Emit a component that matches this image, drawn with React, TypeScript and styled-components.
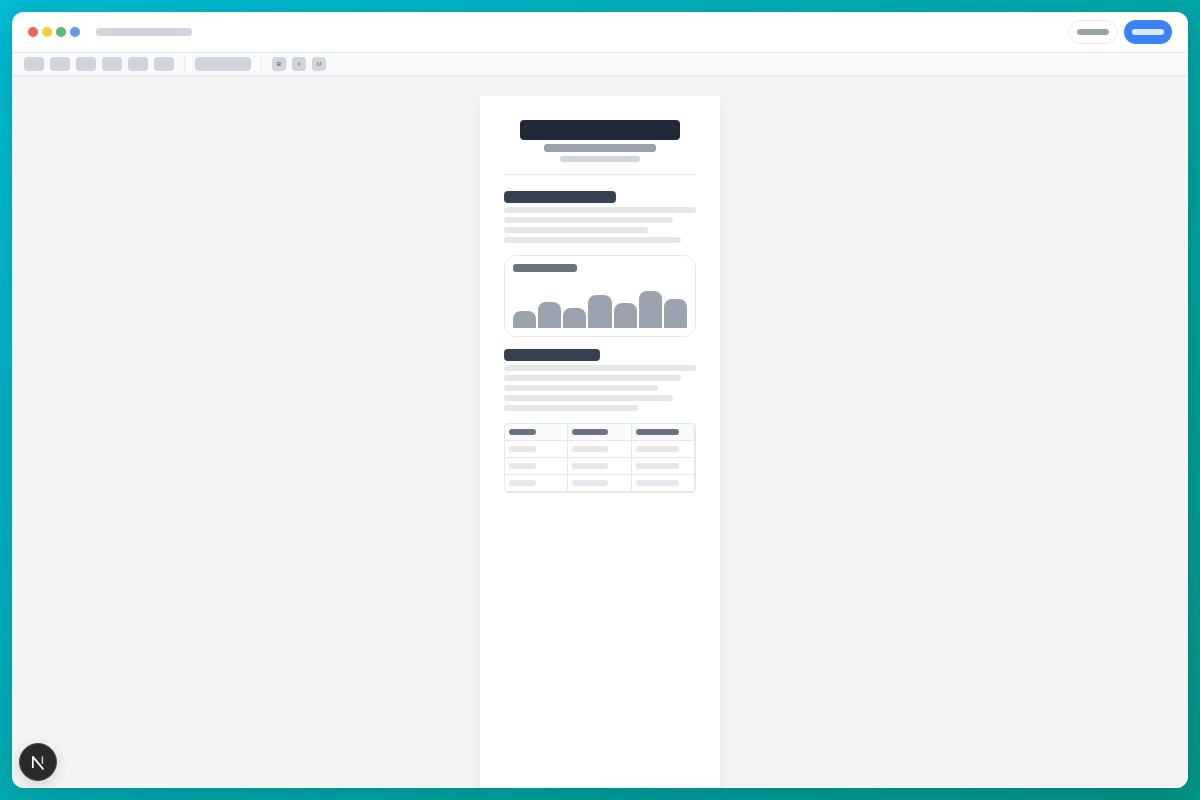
import styled, { createGlobalStyle } from 'styled-components';

const GlobalStyle = createGlobalStyle`
  html, body {
    margin: 0;
    height: 100%;
    font-family: "Liberation Sans", Arial, sans-serif;
  }
  * {
    box-sizing: border-box;
  }
`;

const DOTS = ['#ef6358', '#fbc940', '#5cb873', '#5f9bf3'];
const BARS = [17, 26, 20, 33, 25, 37, 29];
const INTRO_LINES = [192, 169, 144, 177];
const BODY_LINES = [192, 177, 154, 169, 134];
const COLUMNS = [27, 36, 43];

export default function App() {
  return (
    <Page>
      <GlobalStyle />
      <Window>
        <TitleBar>
          <TitleLeft>
            <Dots>
              {DOTS.map((color) => (
                <Dot key={color} $color={color} />
              ))}
            </Dots>
            <FileName />
          </TitleLeft>
          <Actions>
            <GhostButton>
              <Pill $width={32} $color='#9ca3af' />
            </GhostButton>
            <PrimaryButton>
              <Pill $width={32} $color='#dbeafe' />
            </PrimaryButton>
          </Actions>
        </TitleBar>
        <Toolbar>
          <ToolGroup>
            {[0, 1, 2, 3, 4, 5].map((i) => (
              <ToolButton key={i} />
            ))}
          </ToolGroup>
          <Separator />
          <Dropdown />
          <Separator />
          <FormatGroup>
            <FormatButton>B</FormatButton>
            <FormatButton>I</FormatButton>
            <FormatButton>U</FormatButton>
          </FormatGroup>
        </Toolbar>
        <Workspace>
          <Sheet>
            <Header>
              <Title />
              <Subtitle />
              <Meta />
            </Header>
            <Heading $width={112} />
            <Lines>
              {INTRO_LINES.map((width) => (
                <Line key={width} $width={width} />
              ))}
            </Lines>
            <ChartCard>
              <ChartLabel />
              <Bars>
                {BARS.map((height, i) => (
                  <Bar key={i} $height={height} />
                ))}
              </Bars>
            </ChartCard>
            <Heading $width={96} />
            <Lines>
              {BODY_LINES.map((width) => (
                <Line key={width} $width={width} />
              ))}
            </Lines>
            <Table>
              <thead>
                <tr>
                  {COLUMNS.map((width) => (
                    <HeadCell key={width}>
                      <Pill $width={width} $color='#6b7280' />
                    </HeadCell>
                  ))}
                </tr>
              </thead>
              <tbody>
                {[0, 1, 2].map((row) => (
                  <tr key={row}>
                    {COLUMNS.map((width) => (
                      <BodyCell key={width}>
                        <Pill $width={width} $color='#e5e7eb' />
                      </BodyCell>
                    ))}
                  </tr>
                ))}
              </tbody>
            </Table>
          </Sheet>
        </Workspace>
        <DevBadge aria-label='Next.js dev tools'>
          <svg width='16' height='16' viewBox='0 0 16 16' fill='none'>
            <path
              d='M2.8 14V2.6L13.4 15.4'
              stroke='#fff'
              strokeWidth='1.7'
              strokeLinejoin='bevel'
            />
            <path d='M12.4 2.4V10' stroke='#c4c4c4' strokeWidth='1.6' />
          </svg>
        </DevBadge>
      </Window>
    </Page>
  );
}

const Page = styled.div`
  width: 100%;
  height: 100vh;
  padding: 12px;
  overflow: hidden;
  background: linear-gradient(135deg, #00bcd4 0%, #009688 100%);
`;

const Window = styled.div`
  position: relative;
  height: 100%;
  display: flex;
  flex-direction: column;
  overflow: hidden;
  border-radius: 12px;
  background: #fff;
  box-shadow: 0 8px 32px rgba(0, 0, 0, 0.16);
`;

const TitleBar = styled.div`
  flex: none;
  height: 41px;
  padding: 0 16px;
  display: flex;
  align-items: center;
  justify-content: space-between;
  border-bottom: 1px solid #e5e7eb;
  background: #fff;
`;

const TitleLeft = styled.div`
  display: flex;
  align-items: center;
  gap: 16px;
`;

const Dots = styled.div`
  display: flex;
  gap: 4px;
`;

const Dot = styled.span<{ $color: string }>`
  width: 10px;
  height: 10px;
  border-radius: 50%;
  background: ${(p) => p.$color};
`;

const FileName = styled.div`
  width: 96px;
  height: 8px;
  border-radius: 4px;
  background: #d1d5db;
`;

const Actions = styled.div`
  display: flex;
  gap: 6px;
`;

const GhostButton = styled.div`
  width: 50px;
  height: 24px;
  display: flex;
  align-items: center;
  justify-content: center;
  border: 1px solid #e5e7eb;
  border-radius: 12px;
  background: #fff;
`;

const PrimaryButton = styled.div`
  width: 48px;
  height: 24px;
  display: flex;
  align-items: center;
  justify-content: center;
  border-radius: 12px;
  background: #3b82f6;
`;

const Pill = styled.div<{ $width: number; $color: string }>`
  width: ${(p) => p.$width}px;
  height: 6px;
  border-radius: 3px;
  background: ${(p) => p.$color};
`;

const Toolbar = styled.div`
  flex: none;
  height: 23px;
  padding: 0 12px;
  display: flex;
  align-items: center;
  gap: 10px;
  border-bottom: 1px solid #e5e7eb;
  background: #f9fafb;
`;

const ToolGroup = styled.div`
  display: flex;
  gap: 6px;
`;

const ToolButton = styled.div`
  width: 20px;
  height: 14px;
  border-radius: 4px;
  background: #d1d5db;
`;

const Separator = styled.div`
  width: 1px;
  height: 14px;
  background: #e5e7eb;
`;

const Dropdown = styled.div`
  width: 56px;
  height: 14px;
  border-radius: 4px;
  background: #d1d5db;
`;

const FormatGroup = styled.div`
  display: flex;
  gap: 6px;
`;

const FormatButton = styled.div`
  width: 14px;
  height: 14px;
  display: flex;
  align-items: center;
  justify-content: center;
  border-radius: 4px;
  background: #d1d5db;
  color: #6b7280;
  font-size: 6px;
  font-weight: 700;
`;

const Workspace = styled.div`
  flex: 1;
  min-height: 0;
  padding-top: 20px;
  display: flex;
  justify-content: center;
  overflow: hidden;
  background: #f3f4f6;
`;

const Sheet = styled.div`
  flex: none;
  width: 240px;
  height: 1000px;
  padding: 24px;
  background: #fff;
  box-shadow: 0 4px 12px rgba(0, 0, 0, 0.06);
`;

const Header = styled.div`
  height: 55px;
  margin-bottom: 16px;
  display: flex;
  flex-direction: column;
  align-items: center;
  border-bottom: 1px solid #e5e7eb;
`;

const Title = styled.div`
  width: 160px;
  height: 20px;
  border-radius: 4px;
  background: #1f2937;
`;

const Subtitle = styled.div`
  width: 112px;
  height: 8px;
  margin-top: 4px;
  border-radius: 3px;
  background: #9ca3af;
`;

const Meta = styled.div`
  width: 80px;
  height: 6px;
  margin-top: 4px;
  border-radius: 3px;
  background: #d1d5db;
`;

const Heading = styled.div<{ $width: number }>`
  width: ${(p) => p.$width}px;
  height: 12px;
  margin-bottom: 4px;
  border-radius: 4px;
  background: #374151;
`;

const Lines = styled.div`
  display: flex;
  flex-direction: column;
  gap: 4px;
  margin-bottom: 12px;
`;

const Line = styled.div<{ $width: number }>`
  width: ${(p) => p.$width}px;
  height: 6px;
  border-radius: 3px;
  background: #e5e7eb;
`;

const ChartCard = styled.div`
  height: 82px;
  margin-bottom: 12px;
  padding: 8px;
  display: flex;
  flex-direction: column;
  justify-content: space-between;
  border: 1px solid #e5e7eb;
  border-radius: 12px;
`;

const ChartLabel = styled.div`
  width: 64px;
  height: 8px;
  border-radius: 3px;
  background: #6b7280;
`;

const Bars = styled.div`
  display: flex;
  align-items: flex-end;
  gap: 2px;
`;

const Bar = styled.div<{ $height: number }>`
  flex: 1;
  height: ${(p) => p.$height}px;
  border-radius: 8px 8px 0 0;
  background: #9ca3af;
`;

const Table = styled.table`
  width: 192px;
  height: 70px;
  table-layout: fixed;
  border-collapse: separate;
  border-spacing: 0;
  border: 1px solid #e5e7eb;
  border-radius: 4px;
  overflow: hidden;
`;

const HeadCell = styled.th`
  height: 17px;
  padding: 0 4px;
  background: #f9fafb;
  border-right: 1px solid #e5e7eb;
  border-bottom: 1px solid #e5e7eb;
`;

const BodyCell = styled.td`
  height: 17px;
  padding: 0 4px;
  border-right: 1px solid #e5e7eb;
  border-bottom: 1px solid #e5e7eb;
`;

const DevBadge = styled.div`
  position: absolute;
  left: 7px;
  bottom: 7px;
  width: 38px;
  height: 38px;
  display: flex;
  align-items: center;
  justify-content: center;
  border-radius: 50%;
  border: 1px solid #4a4a4a;
  background: #2a2a2a;
  box-shadow: 0 4px 14px rgba(0, 0, 0, 0.14);
`;
